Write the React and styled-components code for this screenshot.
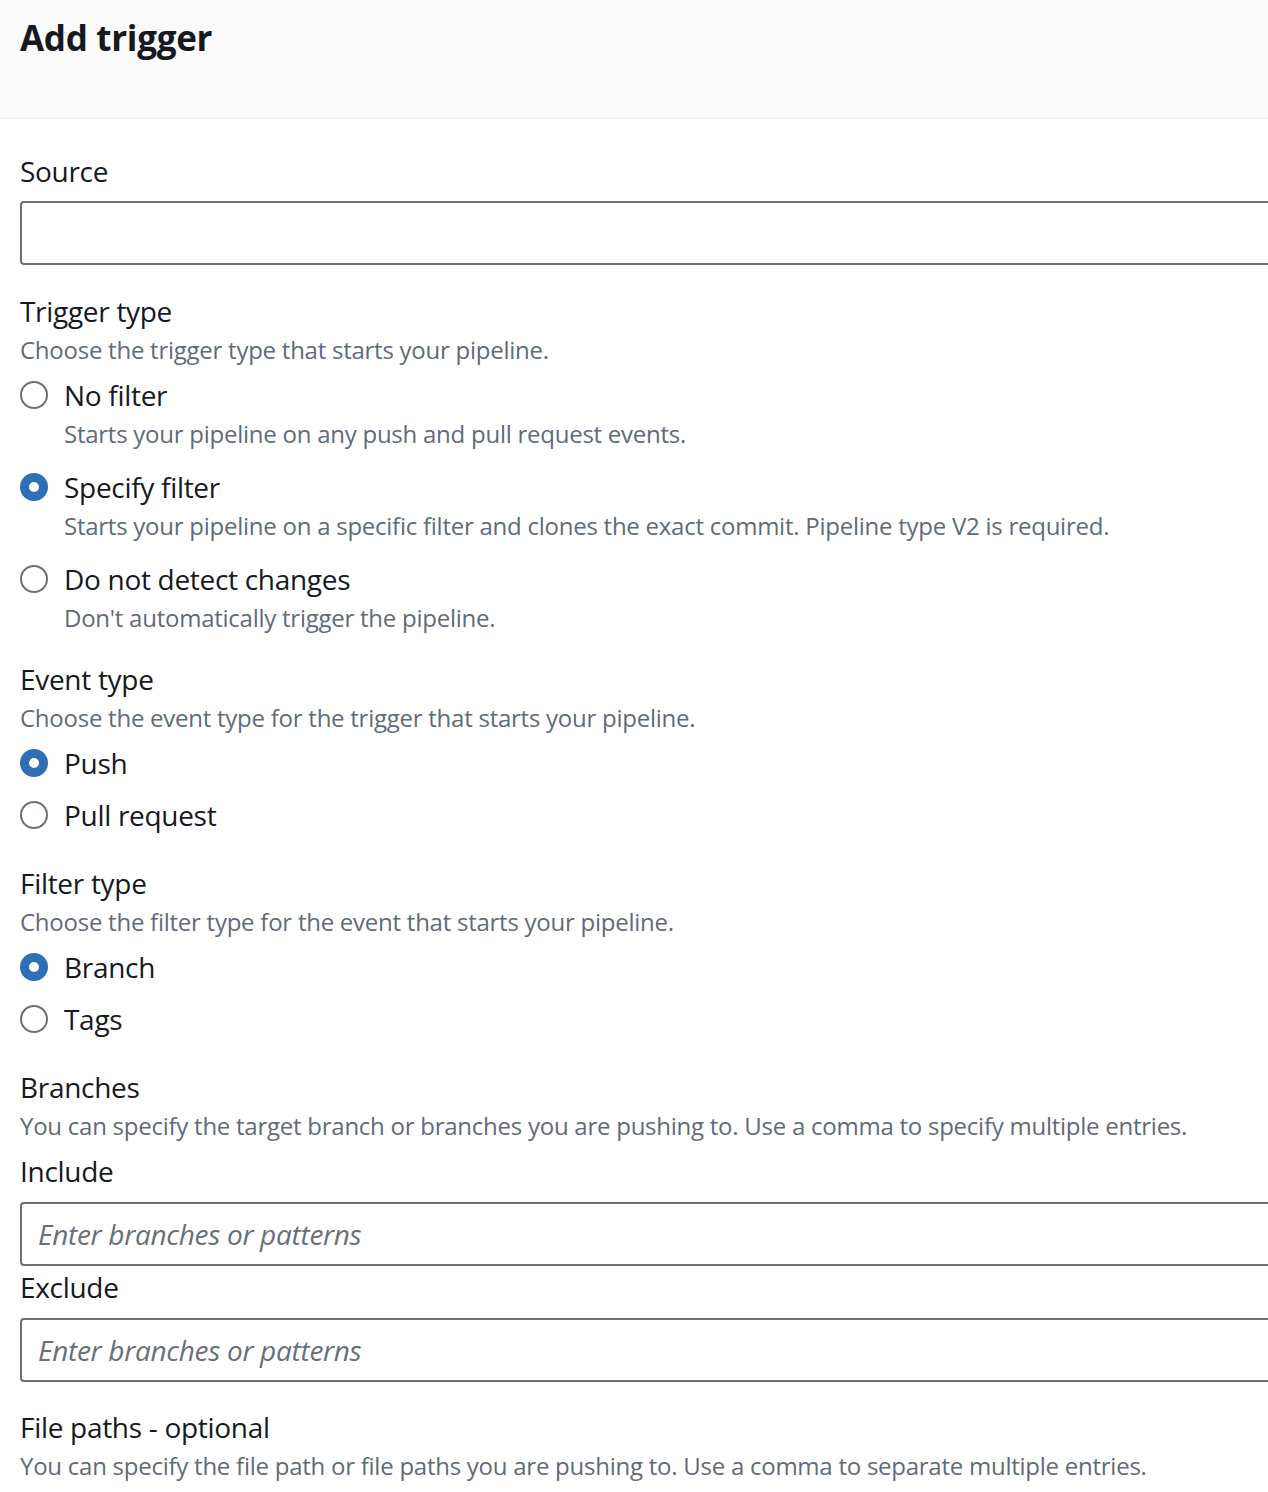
import React from "react";
import styled, { createGlobalStyle } from "styled-components";

const Global = createGlobalStyle`
  html, body { margin: 0; padding: 0; background: #ffffff; overflow-x: hidden; }
  body { font-family: "Open Sans", "Noto Sans", sans-serif; color: #16191f; }
  * { box-sizing: border-box; }
`;

const Page = styled.div`
  width: 1268px;
  overflow: hidden;
`;

const Header = styled.header`
  height: 119px;
  background: #fafafa;
  border-bottom: 1px solid #eaeded;
  padding: 14px 20px 0;
`;

const Title = styled.h1`
  margin: 0;
  font-size: 35px;
  line-height: 48px;
  font-weight: 700;
  letter-spacing: -0.3px;
  color: #16191f;
`;

const Body = styled.div`
  padding: 32px 0 0 20px;
  display: flex;
  flex-direction: column;
`;

const Section = styled.section`
  display: flex;
  flex-direction: column;
  margin-top: ${(p) => p.$mt || 0}px;
`;

const Label = styled.div`
  font-size: 28px;
  line-height: 40px;
  letter-spacing: -0.3px;
  color: #16191f;
  margin-top: ${(p) => p.$mt || 0}px;
`;

const Desc = styled.div`
  font-size: 24px;
  line-height: 38px;
  letter-spacing: -0.25px;
  color: #5f6b7a;
  white-space: nowrap;
`;

const Input = styled.input`
  display: block;
  width: calc(100% + 40px);
  height: 64px;
  margin-top: ${(p) => p.$mt || 0}px;
  border: 2px solid #687078;
  border-radius: 4px;
  padding: 0 16px;
  font-family: inherit;
  font-size: 28px;
  letter-spacing: -0.3px;
  color: #16191f;
  background: #fff;
  outline: none;
  &::placeholder {
    color: #687078;
    font-style: italic;
  }
`;

const RadioGroup = styled.div`
  display: flex;
  flex-direction: column;
  margin-top: 6px;
  gap: ${(p) => p.$gap}px;
`;

const RadioItem = styled.div`
  display: grid;
  grid-template-columns: 44px auto;
  align-items: center;
`;

const Circle = styled.span`
  width: 28px;
  height: 28px;
  border-radius: 50%;
  box-sizing: border-box;
  border: ${(p) => (p.$checked ? "9px solid #2f6fb6" : "2px solid #687078")};
  background: #fff;
`;

const RadioLabel = styled.span`
  font-size: 28px;
  line-height: 40px;
  letter-spacing: -0.3px;
  color: #16191f;
`;

const RadioDesc = styled(Desc)`
  grid-column: 2;
`;

function Radio({ label, desc, checked }) {
  return (
    <RadioItem>
      <Circle $checked={checked} />
      <RadioLabel>{label}</RadioLabel>
      {desc && <RadioDesc>{desc}</RadioDesc>}
    </RadioItem>
  );
}

export default function App() {
  return (
    <Page>
      <Global />
      <Header>
        <Title>Add trigger</Title>
      </Header>
      <Body>
        <Section>
          <Label>Source</Label>
          <Input $mt={10} />
        </Section>

        <Section $mt={26}>
          <Label>Trigger type</Label>
          <Desc>Choose the trigger type that starts your pipeline.</Desc>
          <RadioGroup $gap={14}>
            <Radio label="No filter" desc="Starts your pipeline on any push and pull request events." />
            <Radio
              checked
              label="Specify filter"
              desc="Starts your pipeline on a specific filter and clones the exact commit. Pipeline type V2 is required."
            />
            <Radio label="Do not detect changes" desc="Don't automatically trigger the pipeline." />
          </RadioGroup>
        </Section>

        <Section $mt={22}>
          <Label>Event type</Label>
          <Desc>Choose the event type for the trigger that starts your pipeline.</Desc>
          <RadioGroup $gap={12}>
            <Radio checked label="Push" />
            <Radio label="Pull request" />
          </RadioGroup>
        </Section>

        <Section $mt={28}>
          <Label>Filter type</Label>
          <Desc>Choose the filter type for the event that starts your pipeline.</Desc>
          <RadioGroup $gap={12}>
            <Radio checked label="Branch" />
            <Radio label="Tags" />
          </RadioGroup>
        </Section>

        <Section $mt={28}>
          <Label>Branches</Label>
          <Desc>You can specify the target branch or branches you are pushing to. Use a comma to specify multiple entries.</Desc>
          <Label $mt={6}>Include</Label>
          <Input $mt={11} placeholder="Enter branches or patterns" />
          <Label $mt={1}>Exclude</Label>
          <Input $mt={11} placeholder="Enter branches or patterns" />
        </Section>

        <Section $mt={25}>
          <Label>File paths - optional</Label>
          <Desc>You can specify the file path or file paths you are pushing to. Use a comma to separate multiple entries.</Desc>
        </Section>
      </Body>
    </Page>
  );
}
